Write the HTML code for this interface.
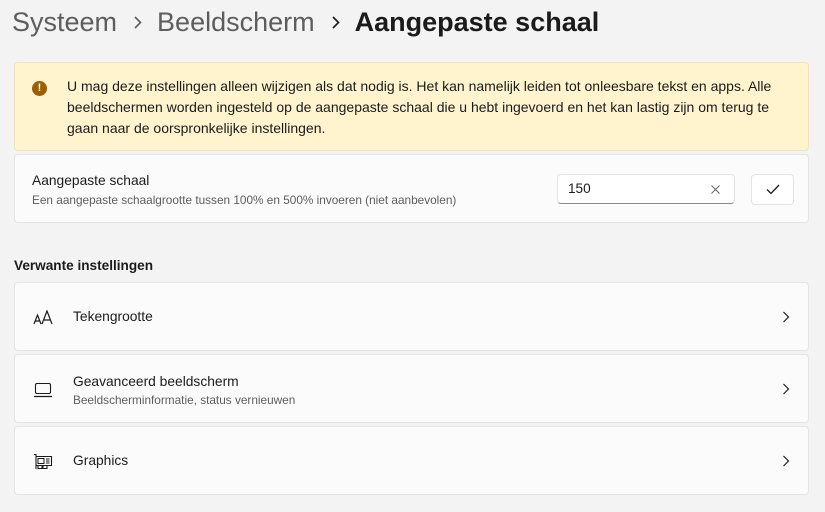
<!DOCTYPE html>
<html><head><style>
body{margin:0;width:825px;height:512px;background:#f3f3f3;font-family:"Segoe UI","Liberation Sans",sans-serif;color:#1b1b1b;overflow:hidden;position:relative}
.t{position:absolute;top:7px;left:12px;font-size:27px;white-space:nowrap}
.t .g{color:#5d5d5d}
.t svg{margin:0 15px 0 17px;position:relative;top:-2px}
.t b{font-weight:600;color:#1b1b1b}
.card{position:absolute;left:14px;width:795px;background:#fbfbfb;border:1px solid #e5e5e5;border-radius:4px;box-sizing:border-box}
.warn{top:62px;height:89px;background:#fff4ce;border-color:#eee5c0}
.warn p{margin:0;position:absolute;left:52px;top:13px;right:14px;font-size:14px;line-height:21px;color:#1b1b1b}
.ic{position:absolute;left:17px;top:18px;width:15px;height:15px;border-radius:50%;background:#9d5d00;color:#fff;font-size:11px;font-weight:bold;text-align:center;line-height:15px}
.l1{position:absolute;left:58px;font-size:13.8px}
.l2{position:absolute;left:58px;font-size:11.8px;color:#5d5d5d}
.chev{position:absolute;right:18px;top:50%;margin-top:-6px}
h3{position:absolute;top:258px;left:14px;margin:0;font-size:13.6px;font-weight:600}
</style></head><body>
<div class="t"><span class="g">Systeem</span><svg width="8" height="13" viewBox="0 0 8 13"><path d="M1 1L6.5 6.5L1 12" fill="none" stroke="#5d5d5d" stroke-width="1.6"/></svg><span class="g">Beeldscherm</span><svg width="8" height="13" viewBox="0 0 8 13"><path d="M1 1L6.5 6.5L1 12" fill="none" stroke="#1b1b1b" stroke-width="1.6"/></svg><b>Aangepaste schaal</b></div>
<div class="card warn"><div class="ic">!</div><p>U mag deze instellingen alleen wijzigen als dat nodig is. Het kan namelijk leiden tot onleesbare tekst en apps. Alle beeldschermen worden ingesteld op de aangepaste schaal die u hebt ingevoerd en het kan lastig zijn om terug te gaan naar de oorspronkelijke instellingen.</p></div>
<div class="card" style="top:154px;height:69px">
<div class="l1" style="left:17px;top:18px">Aangepaste schaal</div>
<div class="l2" style="left:17px;top:38px">Een aangepaste schaalgrootte tussen 100% en 500% invoeren (niet aanbevolen)</div>
<div style="position:absolute;left:542px;top:19px;width:178px;height:30px;background:#fff;border:1px solid #e3e3e3;border-bottom:1px solid #8a8a8a;border-radius:4px;box-sizing:border-box">
<span style="position:absolute;left:10px;top:6px;font-size:13.6px">150</span>
<svg style="position:absolute;right:14px;top:10px" width="9" height="9" viewBox="0 0 9 9"><path d="M0.5 0.5L8.5 8.5M8.5 0.5L0.5 8.5" stroke="#666" stroke-width="1"/></svg></div>
<div style="position:absolute;left:736px;top:19px;width:43px;height:31px;background:#fff;border:1px solid #e3e3e3;border-radius:4px;box-sizing:border-box">
<svg style="position:absolute;left:14px;top:9px" width="14" height="11" viewBox="0 0 14 11"><path d="M1 5.5L5 9.5L13 1" fill="none" stroke="#1b1b1b" stroke-width="1.3"/></svg></div>
</div>
<h3>Verwante instellingen</h3>
<div class="card" style="top:282px;height:69px">
<svg style="position:absolute;left:18px;top:27px" width="22" height="16" viewBox="0 0 22 16"><path d="M1 14L4.5 5L8 14M2.3 11H6.7M9 14L14 1L19 14M10.8 10H17.2" fill="none" stroke="#1b1b1b" stroke-width="1.2"/></svg>
<div class="l1" style="top:26px">Tekengrootte</div>
<svg class="chev" width="8" height="12" viewBox="0 0 8 12"><path d="M1.5 1L6.5 6L1.5 11" fill="none" stroke="#1b1b1b" stroke-width="1.2"/></svg></div>
<div class="card" style="top:354px;height:69px">
<svg style="position:absolute;left:18px;top:27px" width="20" height="16" viewBox="0 0 20 16"><rect x="2.5" y="1.5" width="15" height="10" rx="1.5" fill="none" stroke="#1b1b1b" stroke-width="1.1"/><path d="M1 14.5H19" stroke="#1b1b1b" stroke-width="1.2"/></svg>
<div class="l1" style="top:19px">Geavanceerd beeldscherm</div>
<div class="l2" style="top:38px">Beeldscherminformatie, status vernieuwen</div>
<svg class="chev" width="8" height="12" viewBox="0 0 8 12"><path d="M1.5 1L6.5 6L1.5 11" fill="none" stroke="#1b1b1b" stroke-width="1.2"/></svg></div>
<div class="card" style="top:426px;height:69px">
<svg style="position:absolute;left:18px;top:26px" width="20" height="18" viewBox="0 0 20 18"><path d="M1 1.5H3V16M3 3.5H18.5V12.5H3M5 12.5V15.5H9V12.5M10 12.5V15.5H14V12.5" fill="none" stroke="#1b1b1b" stroke-width="1.1"/><rect x="5" y="5.5" width="6" height="5" fill="none" stroke="#1b1b1b" stroke-width="1"/><path d="M13 6H16.5M13 8H16.5M13 10H16.5" stroke="#1b1b1b" stroke-width="0.9"/></svg>
<div class="l1" style="top:26px">Graphics</div>
<svg class="chev" width="8" height="12" viewBox="0 0 8 12"><path d="M1.5 1L6.5 6L1.5 11" fill="none" stroke="#1b1b1b" stroke-width="1.2"/></svg></div>
</body></html>
